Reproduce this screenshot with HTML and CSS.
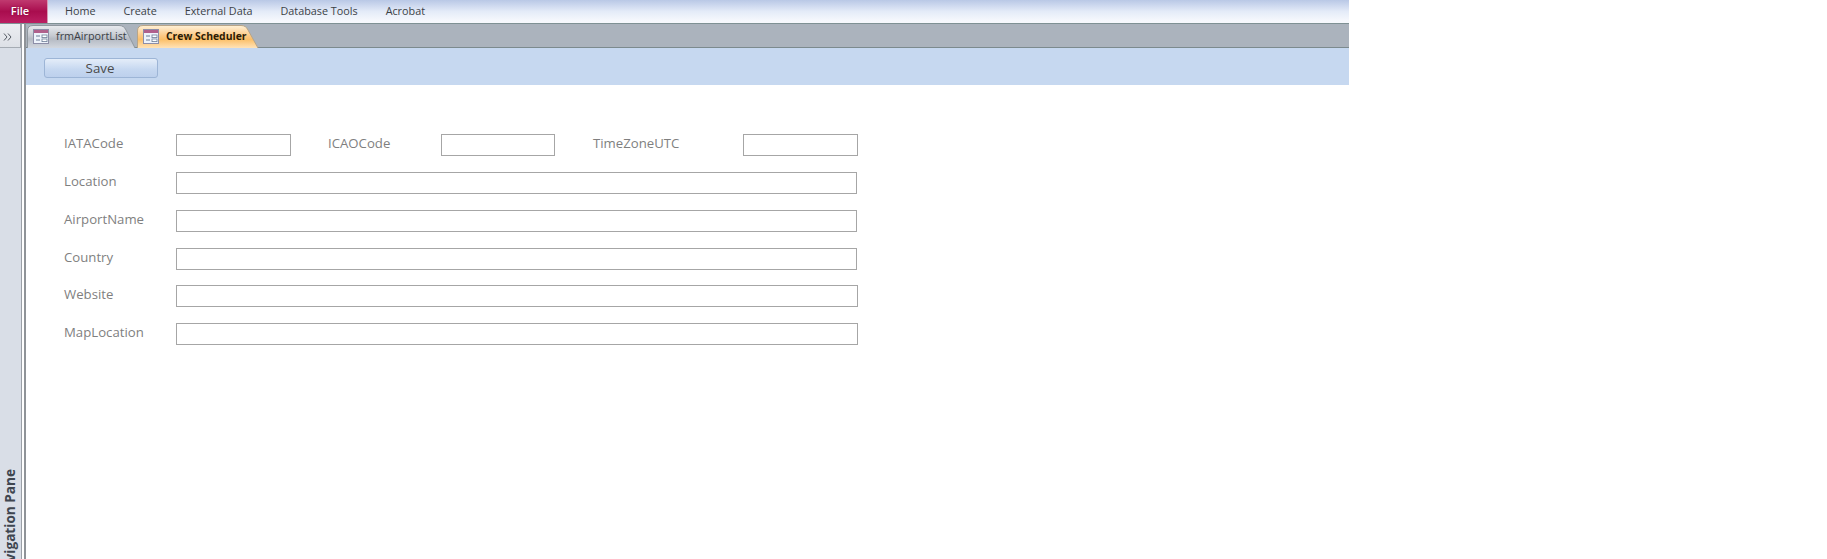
FILE: index.html
```html
<!DOCTYPE html>
<html lang="en">
<head>
<meta charset="utf-8">
<title>Crew Scheduler</title>
<link rel="stylesheet" href="styles.css">
</head>
<body>
<div class="app">
  <header class="ribbon">
    <div class="file">File</div>
    <nav class="menu">
      <span class="menu-item home">Home</span>
      <span class="menu-item">Create</span>
      <span class="menu-item">External Data</span>
      <span class="menu-item">Database Tools</span>
      <span class="menu-item">Acrobat</span>
    </nav>
  </header>
  <div class="work">
    <aside class="nav-pane">
      <div class="chevron"><svg width="9" height="8" viewBox="0 0 9 8"><path d="M1 .5 4 4 1 7.500M5 .5 8 4 5 7.500" fill="none" stroke="#555b64" stroke-width="1"/></svg></div>
      <div class="nav-label">Navigation Pane</div>
    </aside>
    <main class="doc">
      <div class="tabs">
        <div class="tab tab-off">
          <svg class="tab-shape" width="110" height="23" viewBox="0 0 110 23"><defs><linearGradient id="g1" x1="0" y1="0" x2="0" y2="1"><stop offset="0" stop-color="#e9ebef"/><stop offset=".45" stop-color="#c6cad1"/><stop offset=".6" stop-color="#b5bac3"/><stop offset="1" stop-color="#d2d7df"/></linearGradient></defs><path d="M.5 23V6Q.5 .5 6 .5H92Q97 .5 99 5L108 23" fill="url(#g1)" stroke="#8f979e"/></svg>
          <svg class="form-icon" width="16" height="15" viewBox="0 0 16 15"><rect x=".5" y=".5" width="15" height="14" fill="#eef3fb" stroke="#8d8ea8"/><rect x="1" y="1" width="14" height="3" fill="#b0608c"/><path d="M3 7h4M3 11h4" stroke="#6d7d96"/><rect x="9" y="6" width="5" height="2.600" fill="#fff" stroke="#6d7d96" stroke-width=".8"/><rect x="9" y="10" width="5" height="2.600" fill="#fff" stroke="#6d7d96" stroke-width=".8"/></svg>
          <span class="tab-text">frmAirportList</span>
        </div>
        <div class="tab tab-on">
          <svg class="tab-shape" width="122" height="23" viewBox="0 0 122 23"><defs><linearGradient id="g2" x1="0" y1="0" x2="0" y2="1"><stop offset="0" stop-color="#fff1d8"/><stop offset=".45" stop-color="#fdc985"/><stop offset=".62" stop-color="#fbbf68"/><stop offset="1" stop-color="#ffe3b8"/></linearGradient></defs><path d="M.5 23V6Q.5 .5 6 .5H104Q109 .5 111 5L121 23" fill="url(#g2)" stroke="#b8a588"/></svg>
          <svg class="form-icon" width="16" height="15" viewBox="0 0 16 15"><rect x=".5" y=".5" width="15" height="14" fill="#eef3fb" stroke="#8d8ea8"/><rect x="1" y="1" width="14" height="3" fill="#b0608c"/><path d="M3 7h4M3 11h4" stroke="#6d7d96"/><rect x="9" y="6" width="5" height="2.600" fill="#fff" stroke="#6d7d96" stroke-width=".8"/><rect x="9" y="10" width="5" height="2.600" fill="#fff" stroke="#6d7d96" stroke-width=".8"/></svg>
          <span class="tab-text tab-text-on">Crew Scheduler</span>
        </div>
      </div>
      <div class="form-header">
        <button class="save" type="button">Save</button>
      </div>
      <form class="form">
        <div class="row">
          <label class="label">IATACode</label>
          <span class="box box-short"></span>
          <label class="label label-icao">ICAOCode</label>
          <span class="box box-short box-icao"></span>
          <label class="label label-tz">TimeZoneUTC</label>
          <span class="box box-short"></span>
        </div>
        <div class="row"><label class="label">Location</label><span class="box box-long"></span></div>
        <div class="row"><label class="label">AirportName</label><span class="box box-long"></span></div>
        <div class="row"><label class="label">Country</label><span class="box box-long"></span></div>
        <div class="row row-tight"><label class="label">Website</label><span class="box box-wide"></span></div>
        <div class="row"><label class="label">MapLocation</label><span class="box box-wide"></span></div>
      </form>
    </main>
  </div>
</div>
</body>
</html>
```

FILE: styles.css
```css
* { box-sizing: border-box; }
html, body { margin: 0; height: 100%; background: #fff; overflow: hidden; }
body { font-family: "Open Sans", "Noto Sans", sans-serif; }

.app { height: 559px; display: flex; flex-direction: column; }

.ribbon {
  width: 1349px; height: 24px; display: flex; flex: none;
  background: linear-gradient(#b9c8e6, #e4ebf8 50%, #f6f8fd 90%);
  border-bottom: 1px solid #7f9194;
}
.file {
  width: 48px; height: 23px; padding: 3px 7px 0 0; text-align: center;
  font-size: 11px; font-weight: 600; color: #fff;
  background: linear-gradient(#c0396f, #a90d4e 50%, #bb1f62);
  border-right: 1px solid #d79ab5;
  text-shadow: 0 0 2px #7a0a38;
}
.menu { display: flex; gap: 28px; padding-left: 17px; padding-top: 3px; }
.menu-item { font-size: 10.8px; line-height: 16px; color: #3b3f46; }

.work { flex: 1; display: flex; min-height: 0; }

.nav-pane {
  width: 24px; flex: none; position: relative;
  background: #fff; overflow: hidden;
}
.nav-pane::before {
  content: ""; position: absolute; left: 0; top: 0; bottom: 0; width: 21px;
  background: #d9dee7; border-right: 1px solid #9a9fa6;
}
.chevron {
  position: relative; width: 21px; height: 24px; padding: 9px 0 0 3px;
  background: linear-gradient(#eceef2, #dde0e6); border-right: 1px solid #9a9fa6;
  border-bottom: 1px solid #a5abb3;
}
.chevron svg { display: block; }
.nav-label {
  position: absolute; left: 2px; top: 445px;
  writing-mode: vertical-rl; transform: rotate(180deg);
  font-size: 13.6px; font-weight: 700; line-height: 16px; color: #3f4650; white-space: nowrap;
}

.doc { flex: 1; min-width: 0; border-left: 2px solid #8f9398; }

.tabs {
  width: 1323px; height: 24px; display: flex; padding-left: 1px; padding-top: 1px;
  background: #abb3bd; border-bottom: 1px solid #7c8a8e;
}
.tab { position: relative; display: flex; height: 23px; align-items: center; }
.tab-off { width: 110px; }
.tab-on { width: 122px; }
.tab-shape { position: absolute; left: 0; top: 0; }
.form-icon { position: relative; margin-left: 6px; margin-top: -1px; flex: none; }
.tab-text { position: relative; margin-left: 7px; margin-top: -2px; font-size: 10.8px; color: #3b3f46; }
.tab-text-on { font-size: 10.4px; font-weight: 700; color: #2c1c05; }

.form-header {
  width: 1323px; height: 37px; padding: 10px 0 0 18px; background: #c6d8f0;
}
.save {
  display: block; width: 114px; height: 20px; padding: 0 2px 0 0;
  font: 13.3px/18px "Open Sans", sans-serif; color: #4a4a4a;
  background: linear-gradient(#e4edf9, #c5d7f0 60%, #bdd0ec);
  border: 1px solid #9db5d6; border-radius: 3px;
}

.form { padding: 49px 0 0 38px; display: flex; flex-direction: column; gap: 16px; }
.row { display: flex; align-items: center; height: 22px; }
.row-tight { margin-top: -1px; }
.label { width: 112px; flex: none; font-size: 13.2px; line-height: 18px; color: #7f7f7f; margin-top: -5px; }
.label-icao { margin-left: 37px; width: 113px; }
.label-tz { margin-left: 38px; width: 150px; }
.box { display: block; height: 22px; border: 1px solid #a6a6a6; background: #fff; flex: none; }
.box-short { width: 115px; }
.box-icao { width: 114px; }
.box-long { width: 681px; }
.box-wide { width: 682px; }
```
